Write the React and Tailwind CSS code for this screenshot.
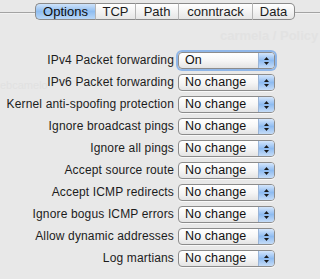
import React from "react";

const TABS = ["Options", "TCP", "Path", "conntrack", "Data"];
const TAB_W = { Options: "w-[60px]", TCP: "w-[40px]", Path: "w-[43px]", conntrack: "w-[74px]", Data: "w-[43px]" };

const ROWS = [
  ["IPv4 Packet forwarding", "On"],
  ["IPv6 Packet forwarding", "No change"],
  ["Kernel anti-spoofing protection", "No change"],
  ["Ignore broadcast pings", "No change"],
  ["Ignore all pings", "No change"],
  ["Accept source route", "No change"],
  ["Accept ICMP redirects", "No change"],
  ["Ignore bogus ICMP errors", "No change"],
  ["Allow dynamic addresses", "No change"],
  ["Log martians", "No change"],
];

function PopUp({ value, focused }) {
  return (
    <div
      className={
        "flex h-[17px] w-[97px] items-stretch rounded-[4px] border border-[#8c8c8c] bg-gradient-to-b from-[#ffffff] via-[#f6f6f6] to-[#e4e4e4] " +
        (focused ? "shadow-[0_0_0_2px_#8fb6e8]" : "shadow-[0_1px_0_#f8f8f8]")
      }
    >
      <span className="flex-1 pl-[6px] text-[12.5px] leading-[15px] tracking-[0.1px] text-[#111]">{value}</span>
      <span className="flex w-[16px] flex-col items-center justify-center gap-[2px] rounded-r-[3px] border-l border-[#9ab4d6] bg-gradient-to-b from-[#d5e6fb] via-[#8ebbf0] to-[#c5dcf7]">
        <svg width="5" height="3" viewBox="0 0 5 3"><path d="M2.5 0 L5 3 L0 3 Z" fill="#1a1a1a" /></svg>
        <svg width="5" height="3" viewBox="0 0 5 3"><path d="M0 0 L5 0 L2.5 3 Z" fill="#1a1a1a" /></svg>
      </span>
    </div>
  );
}

export default function App() {
  return (
    <div className="relative h-[279px] w-[320px] overflow-hidden bg-[#e8e8e8] font-['Lucida_Grande','Liberation_Sans',sans-serif] text-[#1c1c1c]">
      {/* tab view top edge */}
      <div className="absolute left-0 right-0 top-[12px] h-[1px] bg-[#a3a3a3]" />
      <div className="absolute left-0 right-0 top-[13px] h-[1px] bg-[#f2f2f2]" />

      {/* faint ghost text from the window behind */}
      <div className="absolute left-[220px] top-[26px] whitespace-nowrap text-[13px] font-bold text-[#e2e2e2]">carmela / Policy</div>
      <div className="absolute left-0 top-[77px] whitespace-nowrap text-[11px] text-[#e1e1e1]">ebcamelo</div>

      <div className="relative flex pl-[35px] pt-[3px]">
        {TABS.map((t, i) => (
          <div
            key={t}
            className={
              "flex h-[17px] items-center justify-center border-y border-[#8a8a8a] text-[13px] leading-none " +
              TAB_W[t] + " " +
              (i === 0
                ? "rounded-l-[5px] border-l bg-gradient-to-b from-[#cfe3fa] via-[#8fbdf0] to-[#b9d7f7] text-[#0d0d0d]"
                : "border-l border-l-[#b5b5b5] bg-gradient-to-b from-[#ffffff] via-[#f3f3f3] to-[#e6e6e6]") +
              (i === TABS.length - 1 ? " rounded-r-[5px] border-r border-r-[#8a8a8a]" : "")
            }
          >
            {t}
          </div>
        ))}
      </div>

      <div className="mt-[32px] flex flex-col gap-[5px]">
        {ROWS.map(([label, value], i) => (
          <div key={label} className="flex items-center">
            <span className="w-[174px] whitespace-nowrap text-right text-[12px] leading-[17px] tracking-[0.15px]">{label}</span>
            <span className="ml-[4px]">
              <PopUp value={value} focused={i === 0} />
            </span>
          </div>
        ))}
      </div>
    </div>
  );
}
